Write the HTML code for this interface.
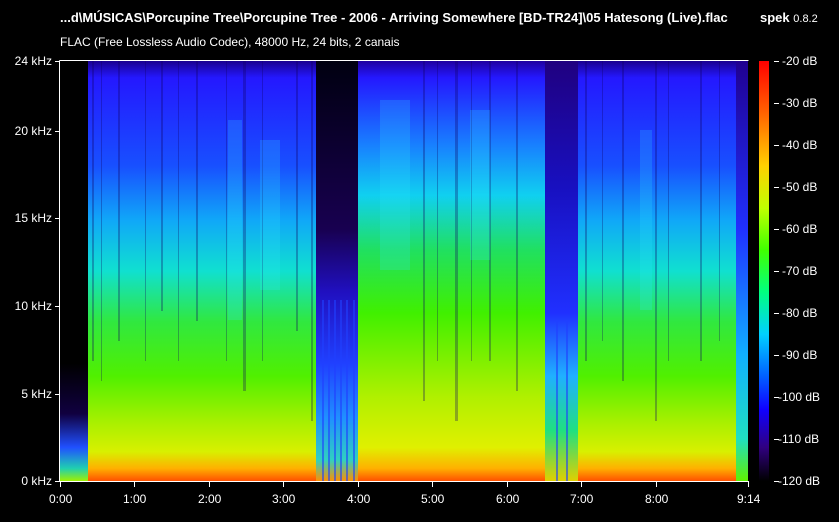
<!DOCTYPE html>
<html><head><meta charset="utf-8"><style>
html,body{margin:0;padding:0;background:#000;}
body{width:839px;height:522px;overflow:hidden;position:relative;font-family:"Liberation Sans",sans-serif;color:#fff;}
.t{position:absolute;white-space:nowrap;font-size:12px;}
</style></head><body>
<div class="t" style="left:60px;top:10px;font-size:13px;font-weight:bold;">...d\MÚSICAS\Porcupine Tree\Porcupine Tree - 2006 - Arriving Somewhere [BD-TR24]\05 Hatesong (Live).flac</div>
<div class="t" style="left:760px;top:10px;font-size:13px;"><b>spek</b> <span style="font-size:11px">0.8.2</span></div>
<div class="t" style="left:60px;top:35px;">FLAC (Free Lossless Audio Codec), 48000 Hz, 24 bits, 2 canais</div>
<svg width="839" height="522" style="position:absolute;left:0;top:0" xmlns="http://www.w3.org/2000/svg">
<defs>
<linearGradient id="gm" x1="0" y1="0" x2="0" y2="1">
<stop offset="0" stop-color="#1a0090"/><stop offset="0.04" stop-color="#2418ff"/><stop offset="0.25" stop-color="#1850ff"/><stop offset="0.38" stop-color="#10a8f8"/><stop offset="0.5" stop-color="#10e0d0"/><stop offset="0.62" stop-color="#30e840"/><stop offset="0.75" stop-color="#50f000"/><stop offset="0.86" stop-color="#a8f000"/><stop offset="0.93" stop-color="#d8f000"/><stop offset="0.97" stop-color="#ffb000"/><stop offset="1" stop-color="#ff5000"/>
</linearGradient>
<linearGradient id="gb" x1="0" y1="0" x2="0" y2="1">
<stop offset="0" stop-color="#2000a0"/><stop offset="0.04" stop-color="#2418ff"/><stop offset="0.2" stop-color="#1880ff"/><stop offset="0.32" stop-color="#10d0f0"/><stop offset="0.45" stop-color="#20e060"/><stop offset="0.6" stop-color="#40f000"/><stop offset="0.8" stop-color="#b0f000"/><stop offset="0.92" stop-color="#e0f000"/><stop offset="0.97" stop-color="#ffb000"/><stop offset="1" stop-color="#ff5000"/>
</linearGradient>
<linearGradient id="gd" x1="0" y1="0" x2="0" y2="1">
<stop offset="0" stop-color="#000010"/><stop offset="0.4" stop-color="#180050"/><stop offset="0.55" stop-color="#2010c0"/><stop offset="0.72" stop-color="#2040ff"/><stop offset="0.85" stop-color="#2090ff"/><stop offset="0.95" stop-color="#30d0c0"/><stop offset="1" stop-color="#ff9000"/>
</linearGradient>
<linearGradient id="gd2" x1="0" y1="0" x2="0" y2="1">
<stop offset="0" stop-color="#200080"/><stop offset="0.3" stop-color="#1810c0"/><stop offset="0.6" stop-color="#2030ff"/><stop offset="0.75" stop-color="#20b0ff"/><stop offset="0.88" stop-color="#20e080"/><stop offset="1" stop-color="#e0d000"/>
</linearGradient>
<linearGradient id="gl" x1="0" y1="0" x2="0" y2="1">
<stop offset="0" stop-color="#000"/><stop offset="0.72" stop-color="#000"/><stop offset="0.84" stop-color="#100040"/><stop offset="0.92" stop-color="#2050ff"/><stop offset="0.97" stop-color="#20d0b0"/><stop offset="1" stop-color="#a0f000"/>
</linearGradient>
<linearGradient id="ge" x1="0" y1="0" x2="0" y2="1">
<stop offset="0" stop-color="#200090"/><stop offset="0.4" stop-color="#2030ff"/><stop offset="0.7" stop-color="#10b0ff"/><stop offset="0.9" stop-color="#20e0c0"/><stop offset="1" stop-color="#60f000"/>
</linearGradient>
<linearGradient id="cb" x1="0" y1="0" x2="0" y2="1">
<stop offset="0" stop-color="#ff0000"/><stop offset="0.12" stop-color="#ff6000"/><stop offset="0.25" stop-color="#ffd000"/><stop offset="0.35" stop-color="#c0ff00"/><stop offset="0.45" stop-color="#40ff00"/><stop offset="0.55" stop-color="#00ff80"/><stop offset="0.65" stop-color="#00d0ff"/><stop offset="0.75" stop-color="#0060ff"/><stop offset="0.83" stop-color="#1000ff"/><stop offset="0.92" stop-color="#300080"/><stop offset="1" stop-color="#000000"/>
</linearGradient>
</defs>
<g>
<rect x="60" y="61" width="28" height="420" fill="url(#gl)"/>
<rect x="88" y="61" width="228" height="420" fill="url(#gm)"/>
<rect x="316" y="61" width="42" height="420" fill="url(#gd)"/>
<rect x="358" y="61" width="187" height="420" fill="url(#gb)"/>
<rect x="545" y="61" width="33" height="420" fill="url(#gd2)"/>
<rect x="578" y="61" width="158" height="420" fill="url(#gm)"/>
<rect x="736" y="61" width="12" height="420" fill="url(#ge)"/>
<g fill="#100060" opacity="0.3">
<rect x="92" y="61" width="2" height="300"/><rect x="101" y="61" width="1" height="320"/><rect x="118" y="61" width="2" height="280"/><rect x="145" y="61" width="1" height="300"/><rect x="161" y="61" width="2" height="250"/><rect x="178" y="61" width="1" height="300"/><rect x="196" y="61" width="2" height="260"/><rect x="226" y="61" width="1" height="300"/><rect x="243" y="61" width="3" height="330"/><rect x="262" y="61" width="1" height="300"/><rect x="296" y="61" width="2" height="270"/><rect x="311" y="61" width="2" height="360"/>
<rect x="423" y="61" width="2" height="340"/><rect x="437" y="61" width="1" height="300"/><rect x="455" y="61" width="3" height="360"/><rect x="471" y="61" width="1" height="300"/><rect x="489" y="61" width="2" height="300"/><rect x="516" y="61" width="2" height="330"/>
<rect x="585" y="61" width="2" height="300"/><rect x="602" y="61" width="1" height="280"/><rect x="622" y="61" width="2" height="320"/><rect x="655" y="61" width="2" height="360"/><rect x="668" y="61" width="1" height="300"/><rect x="700" y="61" width="2" height="300"/><rect x="719" y="61" width="1" height="280"/>
</g>
<g fill="#30e8ff" opacity="0.2">
<rect x="228" y="120" width="14" height="200"/><rect x="380" y="100" width="30" height="170"/><rect x="260" y="140" width="20" height="150"/><rect x="640" y="130" width="12" height="180"/><rect x="470" y="110" width="20" height="150"/>
</g>
<g fill="#2040ff" opacity="0.6">
<rect x="322" y="300" width="2" height="181"/><rect x="328" y="300" width="2" height="181"/><rect x="334" y="300" width="2" height="181"/><rect x="340" y="300" width="2" height="181"/><rect x="346" y="300" width="2" height="181"/><rect x="353" y="300" width="2" height="181"/>
<rect x="556" y="320" width="2" height="161"/><rect x="566" y="320" width="2" height="161"/>
</g>
<rect x="759" y="61" width="10" height="420" fill="url(#cb)"/>
<g stroke="#fff" stroke-width="1" fill="none">
<path d="M59.5 60.5H748.5M59.5 60.5V481.5H748.5"/>
<path d="M55 61.5h5M55 131.5h5M55 218.5h5M55 306.5h5M55 394.5h5M55 481.5h5"/>
<path d="M60.5 481v6M134.5 481v6M209.5 481v6M283.5 481v6M358.5 481v6M432.5 481v6M507.5 481v6M581.5 481v6M656.5 481v6M748.5 481v6"/>
<path d="M774 61.5h5M774 103.5h5M774 145.5h5M774 187.5h5M774 229.5h5M774 271.5h5M774 313.5h5M774 355.5h5M774 397.5h5M774 439.5h5M774 481.5h5"/>
</g>
</g>
</svg>
<div style="position:absolute;left:0;top:0;width:839px;height:522px;">
<div class="t" style="right:787px;top:54px">24 kHz</div>
<div class="t" style="right:787px;top:124px">20 kHz</div>
<div class="t" style="right:787px;top:211px">15 kHz</div>
<div class="t" style="right:787px;top:299px">10 kHz</div>
<div class="t" style="right:787px;top:387px">5 kHz</div>
<div class="t" style="right:787px;top:474px">0 kHz</div>
<div class="t" style="left:49px;top:492px">0:00</div>
<div class="t" style="left:123px;top:492px">1:00</div>
<div class="t" style="left:198px;top:492px">2:00</div>
<div class="t" style="left:272px;top:492px">3:00</div>
<div class="t" style="left:347px;top:492px">4:00</div>
<div class="t" style="left:421px;top:492px">5:00</div>
<div class="t" style="left:496px;top:492px">6:00</div>
<div class="t" style="left:570px;top:492px">7:00</div>
<div class="t" style="left:645px;top:492px">8:00</div>
<div class="t" style="left:737px;top:492px">9:14</div>
<div class="t" style="left:782px;top:54px">-20 dB</div>
<div class="t" style="left:782px;top:96px">-30 dB</div>
<div class="t" style="left:782px;top:138px">-40 dB</div>
<div class="t" style="left:782px;top:180px">-50 dB</div>
<div class="t" style="left:782px;top:222px">-60 dB</div>
<div class="t" style="left:782px;top:264px">-70 dB</div>
<div class="t" style="left:782px;top:306px">-80 dB</div>
<div class="t" style="left:782px;top:348px">-90 dB</div>
<div class="t" style="left:778px;top:390px">-100 dB</div>
<div class="t" style="left:778px;top:432px">-110 dB</div>
<div class="t" style="left:778px;top:474px">-120 dB</div>
</div>
</body></html>
